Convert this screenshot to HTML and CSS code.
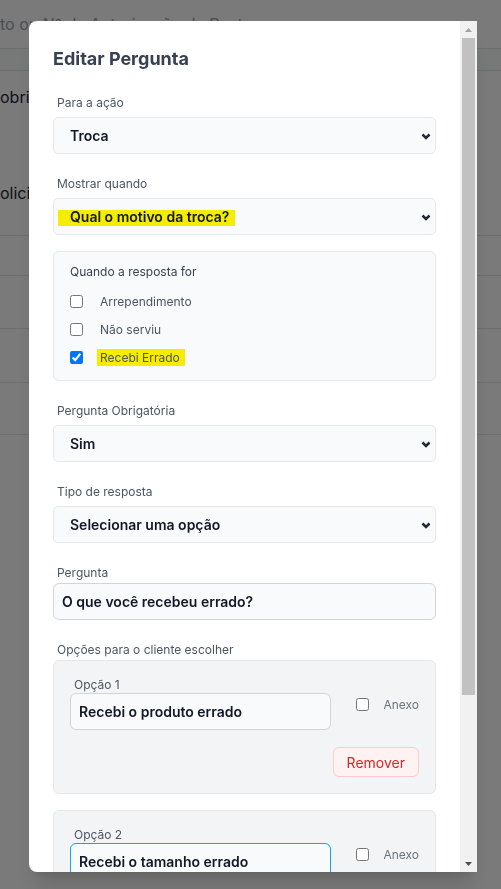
FILE: index.html
```html
<!DOCTYPE html>
<html lang="pt-BR">
<head>
    <meta charset="UTF-8">
    <meta name="viewport" content="width=device-width, initial-scale=1.0">
    <title>Editar Pergunta</title>
    <link rel="stylesheet" href="styles.css">
</head>
<body>
    <!-- página por trás do modal -->
    <div class="page">
        <div class="search">to ou Nº de Autorização de Postagem</div>
        <div class="table-head"></div>
        <div class="row row-1">
            <span class="cell">obrigatória</span>
            <span class="cell cell-bottom">olicitação</span>
        </div>
        <div class="row row-2"></div>
        <div class="row row-3"></div>
        <div class="row row-4"></div>
        <div class="row row-5"></div>
    </div>

    <div class="overlay"></div>

    <div class="modal">
        <form class="modal-body" id="questionForm">
            <h2 class="modal-title">Editar Pergunta</h2>

            <div class="field">
                <label class="field-label" for="action">Para a ação</label>
                <div class="select-wrap">
                    <select class="select" id="action" name="action">
                        <option>Troca</option>
                        <option>Devolução</option>
                    </select>
                    <svg class="chevron" viewBox="0 0 10 7"><path d="M1.5 1.5 5 5l3.5-3.5"/></svg>
                </div>
            </div>

            <div class="field">
                <label class="field-label" for="showWhen">Mostrar quando</label>
                <div class="select-wrap">
                    <select class="select select--marked" id="showWhen" name="showWhen">
                        <option>Qual o motivo da troca?</option>
                    </select>
                    <svg class="chevron" viewBox="0 0 10 7"><path d="M1.5 1.5 5 5l3.5-3.5"/></svg>
                </div>
                <div class="answers">
                    <div class="answers-title">Quando a resposta for</div>
                    <label class="check-row"><input type="checkbox" name="answer" value="Arrependimento">Arrependimento</label>
                    <label class="check-row"><input type="checkbox" name="answer" value="Não serviu">Não serviu</label>
                    <label class="check-row"><input type="checkbox" name="answer" value="Recebi Errado" checked><span class="mark">Recebi Errado</span></label>
                </div>
            </div>

            <div class="field">
                <label class="field-label" for="required">Pergunta Obrigatória</label>
                <div class="select-wrap">
                    <select class="select" id="required" name="required">
                        <option>Sim</option>
                        <option>Não</option>
                    </select>
                    <svg class="chevron" viewBox="0 0 10 7"><path d="M1.5 1.5 5 5l3.5-3.5"/></svg>
                </div>
            </div>

            <div class="field">
                <label class="field-label" for="answerType">Tipo de resposta</label>
                <div class="select-wrap">
                    <select class="select" id="answerType" name="answerType">
                        <option>Selecionar uma opção</option>
                        <option>Texto livre</option>
                    </select>
                    <svg class="chevron" viewBox="0 0 10 7"><path d="M1.5 1.5 5 5l3.5-3.5"/></svg>
                </div>
            </div>

            <div class="field">
                <label class="field-label field-label--tight" for="question">Pergunta</label>
                <input class="text-input" type="text" id="question" name="question" value="O que você recebeu errado?">
            </div>

            <div class="field">
                <div class="field-label field-label--options">Opções para o cliente escolher</div>

                <div class="option">
                    <label class="option-label" for="option1">Opção 1</label>
                    <div class="option-row">
                        <input class="text-input" type="text" id="option1" value="Recebi o produto errado">
                        <label class="attach"><input type="checkbox">Anexo</label>
                    </div>
                    <div class="option-actions">
                        <button type="button" class="btn-remove">Remover</button>
                    </div>
                </div>

                <div class="option">
                    <label class="option-label" for="option2">Opção 2</label>
                    <div class="option-row">
                        <input class="text-input is-focused" type="text" id="option2" value="Recebi o tamanho errado">
                        <label class="attach"><input type="checkbox">Anexo</label>
                    </div>
                </div>
            </div>
        </form>

        <!-- barra de rolagem do modal -->
        <div class="scrollbar">
            <span class="scroll-btn scroll-btn--up"><svg viewBox="0 0 7 4"><path d="M0 4 3.5 0 7 4z"/></svg></span>
            <span class="scroll-track"><span class="scroll-thumb"></span></span>
            <span class="scroll-btn scroll-btn--down"><svg viewBox="0 0 7 4"><path d="M0 0h7L3.5 4z"/></svg></span>
        </div>
    </div>
</body>
</html>
```

FILE: styles.css
```css
body {
    margin: 0;
    font-family: Inter, "Noto Sans", sans-serif;
    background: #fff;
    color: #1f2937;
    overflow: hidden;
}

/* página de fundo */
.page {
    font-size: 16px;
}
.search {
    height: 48px;
    line-height: 48px;
    color: #9ca3af;
    white-space: nowrap;
}
.table-head {
    height: 21px;
    border-top: 1px solid #e5e7eb;
    border-bottom: 1px solid #e5e7eb;
    background: #f9fafb;
}
.row {
    border-bottom: 1px solid #e5e7eb;
    box-sizing: border-box;
}
.row-1 { height: 165px; padding-top: 14px; }
.row-2 { height: 40px; }
.row-3 { height: 53px; }
.row-4 { height: 54px; }
.row-5 { height: 52px; }
.cell {
    display: block;
    width: 29px;
    overflow: hidden;
    line-height: 24px;
    white-space: nowrap;
}
.cell-bottom {
    margin-top: 72px;
}

.overlay {
    position: fixed;
    inset: 0;
    background: rgba(0, 0, 0, 0.52);
}

/* modal */
.modal {
    position: fixed;
    left: 29px;
    top: 21px;
    width: 448px;
    height: 851px;
    display: flex;
    background: #fff;
    border-radius: 8px 0 0 8px;
    box-shadow: 0 20px 25px -5px rgba(0, 0, 0, 0.12), 0 8px 10px -6px rgba(0, 0, 0, 0.12);
    overflow: hidden;
}
.modal-body {
    flex: 1;
    min-width: 0;
    box-sizing: border-box;
    padding: 24px 24px 0;
    overflow: hidden;
}

.scrollbar {
    flex: none;
    width: 17px;
    display: flex;
    flex-direction: column;
    background: #f1f1f1;
}
.scroll-btn {
    height: 17px;
    display: flex;
    align-items: center;
    justify-content: center;
}
.scroll-btn svg {
    width: 7px;
    height: 4px;
}
.scroll-btn--up svg { fill: #a3a3a3; }
.scroll-btn--down svg { fill: #505050; }
.scroll-track {
    flex: 1;
    padding: 0 2px;
}
.scroll-thumb {
    display: block;
    height: 657px;
    background: #c1c1c1;
}

.modal-title {
    margin: 0;
    font-size: 18px;
    font-weight: 700;
    line-height: 28px;
    color: #374151;
}

.field {
    margin-top: 20px;
}
.field-label {
    display: block;
    padding-left: 4px;
    margin-bottom: 4px;
    font-size: 12px;
    line-height: 20px;
    color: #4b5563;
}
.field-label--tight {
    margin-bottom: 0;
}
.field-label--options {
    margin: 1px 0 0;
}

.select-wrap {
    position: relative;
}
.select {
    display: block;
    width: 100%;
    height: 37px;
    box-sizing: border-box;
    padding: 0 30px 0 16px;
    border: 1px solid #e5e7eb;
    border-radius: 5px;
    background: #f9fafb;
    font-family: inherit;
    font-size: 14px;
    font-weight: 600;
    color: #111827;
    appearance: none;
    outline: none;
}
/* marca-texto amarelo sobre a pergunta escolhida */
.select--marked {
    background: linear-gradient(#f6ec00, #f6ec00) 4px 11px / 177px 16px no-repeat, #f9fafb;
}
.chevron {
    position: absolute;
    right: 5px;
    top: 50%;
    width: 10px;
    height: 7px;
    margin-top: -3px;
    fill: none;
    stroke: #1f2937;
    stroke-width: 2.5;
    pointer-events: none;
}

.answers {
    margin-top: 16px;
    padding: 10px 16px 9px;
    border: 1px solid #e5e7eb;
    border-radius: 6px;
    background: #f9fafb;
}
.answers-title {
    margin-bottom: 5px;
    font-size: 12px;
    line-height: 20px;
    color: #374151;
}
.check-row {
    display: flex;
    align-items: center;
    height: 28px;
    font-size: 12px;
    color: #4b5563;
}
.check-row input {
    width: 13px;
    height: 13px;
    margin: 0 17px 0 0;
}
.mark {
    display: inline-block;
    line-height: 17px;
    padding: 0 5px 0 3px;
    margin-left: -3px;
    background: #f6ec00;
}

.text-input {
    display: block;
    width: 100%;
    height: 37px;
    box-sizing: border-box;
    padding: 0 8px;
    border: 1px solid #d1d5db;
    border-radius: 6px;
    background: #f9fafb;
    font-family: inherit;
    font-size: 14px;
    font-weight: 600;
    color: #111827;
    outline: none;
}
.text-input.is-focused {
    border-color: #0ea5e9;
}

.option {
    padding: 16px;
    border: 1px solid #e5e7eb;
    border-radius: 6px;
    background: #f3f4f6;
}
.option + .option {
    margin-top: 16px;
}
.option-label {
    display: block;
    padding-left: 4px;
    font-size: 12px;
    line-height: 16px;
    color: #4b5563;
}
.option-row {
    display: flex;
    align-items: flex-start;
    gap: 25px;
}
.option-row .text-input {
    flex: 1;
    width: auto;
    min-width: 0;
}
.attach {
    display: flex;
    align-items: center;
    gap: 14px;
    height: 22px;
    font-size: 12px;
    color: #6b7280;
}
.attach input {
    width: 13px;
    height: 13px;
    margin: 0;
}
.option-actions {
    display: flex;
    justify-content: flex-end;
    margin-top: 17px;
}
.btn-remove {
    height: 30px;
    padding: 0 13px;
    border: 1px solid #fecaca;
    border-radius: 6px;
    background: #fef2f2;
    color: #dc2626;
    font-family: inherit;
    font-size: 14px;
    cursor: pointer;
}
```
